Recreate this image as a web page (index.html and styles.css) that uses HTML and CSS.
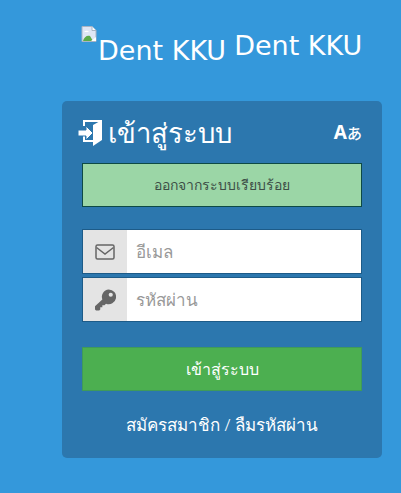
FILE: index.html
```html
<!DOCTYPE html>
<html lang="th">
<head>
<meta charset="utf-8">
<title>Dent KKU</title>
<link rel="stylesheet" href="styles.css">
</head>
<body>
<div class="page">
  <header class="brand">
    <span class="broken">
      <svg class="broken-icon" width="16" height="16" viewBox="0 0 16 16">
        <path d="M1 .5h10l4 4v11H1z" fill="#dfe6f5" stroke="#a9b4c4"/>
        <path d="M11 .5v4h4" fill="#fff" stroke="#a9b4c4"/>
        <path d="M3 6c2-2 4-1 5 0H3z" fill="#fff"/>
        <path d="M2 15c1-4 4-6 7-5l3 5z" fill="#5cab4a"/>
        <path d="M10 15l5-4v4z" fill="#fff"/>
      </svg>
      <span class="alt">Dent KKU</span>
    </span>
    <span class="name">Dent KKU</span>
  </header>
  <main class="card">
    <div class="card-head">
      <h1 class="title">
        <svg class="door" width="26" height="28" viewBox="0 0 26 28">
          <path d="M5 1h19v2H7v4H5zM5 17h2v4h8v2H5z" fill="#fff"/>
          <path d="M15 6l9-5v20l-9 6z" fill="#fff"/>
          <path d="M8 7l7 7-7 7v-4H0v-6h8z" fill="#fff" stroke="#2c77ae"/>
        </svg>
        <span>เข้าสู่ระบบ</span>
      </h1>
      <span class="lang">A<span class="lang-jp">あ</span></span>
    </div>
    <div class="alert">ออกจากระบบเรียบร้อย</div>
    <div class="fields">
      <label class="field">
        <span class="addon">
          <svg width="20" height="16" viewBox="0 0 20 16">
            <rect x="1" y="1" width="18" height="14" rx="1.500" fill="none" stroke="#666" stroke-width="1.500"/>
            <path d="M1.500 3.500 10 10l8.500-6.500" fill="none" stroke="#666" stroke-width="1.500"/>
          </svg>
        </span>
        <input class="input" type="text" placeholder="อีเมล">
      </label>
      <label class="field">
        <span class="addon">
          <svg class="key" width="21" height="22" viewBox="0 0 20 20">
            <path d="M13 0a7 7 0 1 1-2.500 13.500L9 15H7v2H5v2l-1 1H1l-1-1v-3l7-6.500A7 7 0 0 1 13 0z" fill="#666"/>
            <circle cx="15" cy="5" r="2" fill="#e4e4e4"/>
          </svg>
        </span>
        <input class="input" type="password" placeholder="รหัสผ่าน">
      </label>
    </div>
    <button class="submit" type="button">เข้าสู่ระบบ</button>
    <div class="links">สมัครสมาชิก / ลืมรหัสผ่าน</div>
  </main>
</div>
</body>
</html>
```

FILE: styles.css
```css
* { box-sizing: border-box; }
html, body { margin: 0; }
body {
  background: #3498db;
  font-family: "Noto Sans", "DejaVu Sans", sans-serif;
  color: #fff;
  height: 493px;
  overflow: hidden;
}
.page { width: 320px; margin-left: 62px; padding-top: 26px; }
.brand {
  display: flex;
  align-items: flex-start;
  height: 75px;
  padding-left: 19px;
  gap: 8px;
  font-family: "DejaVu Sans", sans-serif;
  font-size: 27px;
  line-height: 32px;
}
.broken { display: flex; }
.broken-icon { flex: none; }
.alt { margin: 9px 0 0 1px; }
.name { margin-top: 4px; }
.card {
  background: #2c77ae;
  border-radius: 5px;
  height: 357px;
  padding: 15px 20px 0;
}
.card-head {
  display: flex;
  justify-content: space-between;
  align-items: center;
  height: 47px;
  margin-left: -4px;
  padding-bottom: 14px;
}
.title {
  display: flex;
  align-items: center;
  gap: 4px;
  margin: 0;
  font-size: 27.5px;
  font-weight: 300;
}
.lang { font-size: 19px; font-weight: 700; line-height: 1; }
.lang-jp { font-family: "Noto Sans CJK JP", sans-serif; font-weight: 500; font-size: 15px; }
.alert {
  height: 44px;
  background: #9bd6a6;
  border: 1px solid #0e4a45;
  color: #3d4f46;
  font-size: 14px;
  line-height: 42px;
  text-align: center;
}
.fields { display: flex; flex-direction: column; gap: 3px; margin-top: 22px; }
.field {
  display: flex;
  height: 45px;
  background: #fff;
  border: 1px solid #1d5b88;
}
.addon {
  flex: none;
  width: 44px;
  background: #e4e4e4;
  display: flex;
  align-items: center;
  justify-content: center;
}
.input {
  flex: 1;
  min-width: 0;
  border: 0;
  outline: 0;
  padding: 0 9px;
  font: 300 17px "Noto Sans", "DejaVu Sans", sans-serif;
  background: #fff;
}
.input::placeholder { color: #999; opacity: 1; }
.submit {
  display: block;
  width: 100%;
  height: 44px;
  margin-top: 25px;
  background: #4caf50;
  border: 1px solid #3f9a5a;
  color: #fff;
  font: 300 16px "Noto Sans", "DejaVu Sans", sans-serif;
}
.links {
  margin-top: 20px;
  text-align: center;
  font-size: 17px;
  font-weight: 300;
  line-height: 28px;
}
```
